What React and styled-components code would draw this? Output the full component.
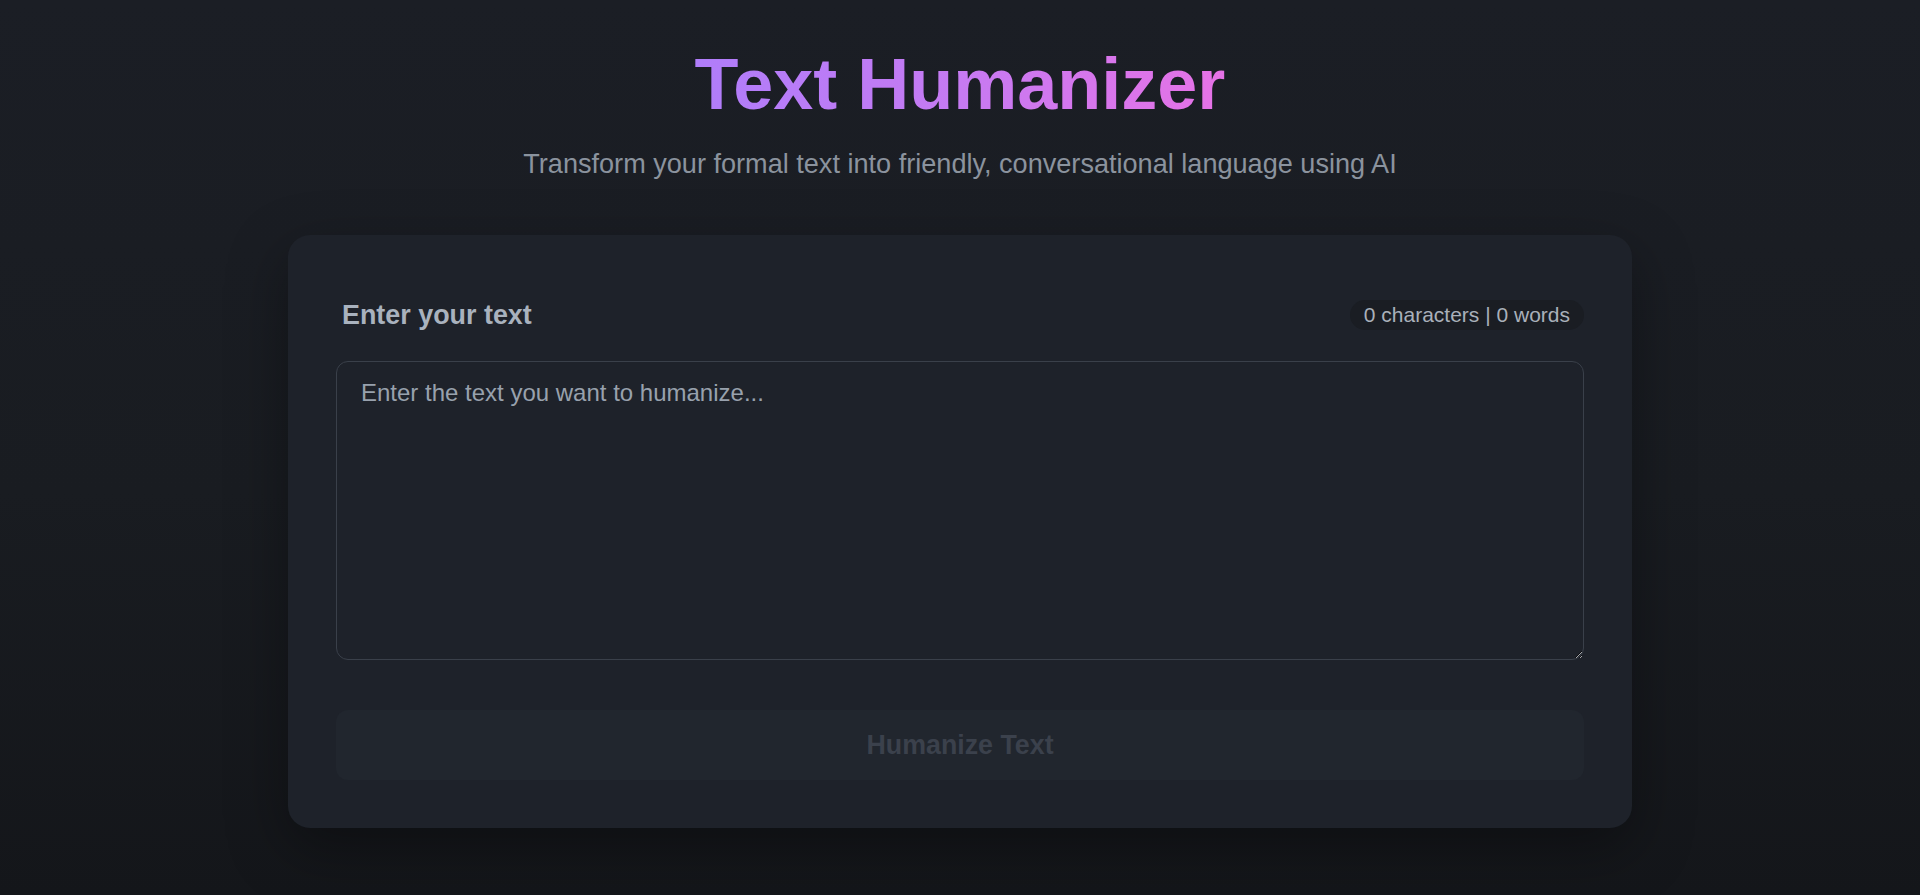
import React, { useState } from "react";
import styled, { createGlobalStyle } from "styled-components";

const GlobalStyle = createGlobalStyle`
  html, body {
    margin: 0;
    padding: 0;
  }
  body {
    font-family: "Liberation Sans", Arial, sans-serif;
    background: linear-gradient(180deg, #1b1e25 0%, #191c21 55%, #14161a 100%);
    min-height: 100vh;
    color: #c9d1d9;
  }
`;

const App = () => {
  const [text, setText] = useState("");
  const chars = text.length;
  const words = text.trim() ? text.trim().split(/\s+/).length : 0;

  return (
    <Page>
      <GlobalStyle />
      <Header>
        <Title>Text Humanizer</Title>
        <Subtitle>
          Transform your formal text into friendly, conversational language
          using AI
        </Subtitle>
      </Header>
      <Card>
        <InputHeader>
          <Label>Enter your text</Label>
          <Counter>
            {chars} characters | {words} words
          </Counter>
        </InputHeader>
        <TextArea
          value={text}
          onChange={(e) => setText(e.target.value)}
          placeholder="Enter the text you want to humanize..."
        />
        <Button disabled={!text.trim()}>Humanize Text</Button>
      </Card>
    </Page>
  );
};
export default App;

const Page = styled.div`
  min-height: 100vh;
  padding: 41px 0 60px;
  box-sizing: border-box;
  display: flex;
  flex-direction: column;
  align-items: center;
`;
const Header = styled.header`
  display: flex;
  flex-direction: column;
  align-items: center;
  margin-bottom: 50px;
`;
const Title = styled.h1`
  margin: 0 0 17px;
  font-size: 72px;
  line-height: 1.2;
  font-weight: 700;
  background: linear-gradient(90deg, #b07dfa 0%, #c67af2 50%, #e672e6 100%);
  -webkit-background-clip: text;
  background-clip: text;
  color: transparent;
`;
const Subtitle = styled.p`
  margin: 0;
  font-size: 27.1px;
  line-height: 1.5;
  color: #8b939e;
`;
const Card = styled.main`
  width: 1344px;
  box-sizing: border-box;
  padding: 48px;
  background: #1e222a;
  border-radius: 22px;
  box-shadow: 0 20px 60px rgba(0, 0, 0, 0.35);
  display: flex;
  flex-direction: column;
`;
const InputHeader = styled.div`
  display: flex;
  align-items: center;
  justify-content: space-between;
  padding-top: 16px;
  margin-bottom: 30px;
`;
const Label = styled.label`
  padding-left: 6px;
  font-size: 26.9px;
  line-height: 1.2;
  font-weight: 700;
  color: #a9b2be;
`;
const Counter = styled.span`
  padding: 4px 14px;
  font-size: 21px;
  line-height: 22px;
  color: #a9b0ba;
  background: #1a1d23;
  border-radius: 999px;
`;
const TextArea = styled.textarea`
  display: block;
  width: 100%;
  height: 299px;
  box-sizing: border-box;
  margin: 0 0 50px;
  padding: 16px 24px;
  font-family: "Liberation Sans", Arial, sans-serif;
  font-size: 24px;
  line-height: 1.25;
  color: #c9d1d9;
  background: #1e222a;
  border: 1px solid #3a404a;
  border-radius: 12px;
  outline: none;
  resize: vertical;

  &::placeholder {
    color: #98a1ad;
  }
`;
const Button = styled.button`
  height: 70px;
  width: 100%;
  border: none;
  border-radius: 12px;
  background: #21262e;
  color: #3b414c;
  font-family: "Liberation Sans", Arial, sans-serif;
  font-size: 26.8px;
  font-weight: 700;
  cursor: pointer;

  &:disabled {
    cursor: not-allowed;
  }
`;
